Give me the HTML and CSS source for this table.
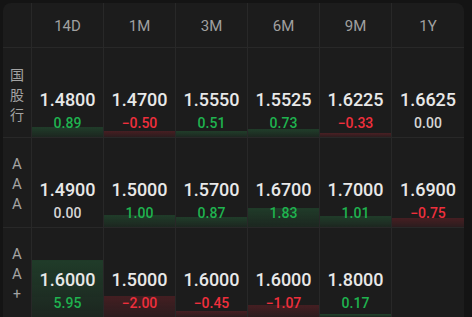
FILE: index.html
```html
<!DOCTYPE html>
<html lang="zh">
<head>
<meta charset="utf-8">
<link rel="stylesheet" href="styles.css">
</head>
<body>
<div class="panel">
  <div class="grid">
    <div class="hd corner"></div>
    <div class="hd">14D</div>
    <div class="hd">1M</div>
    <div class="hd">3M</div>
    <div class="hd">6M</div>
    <div class="hd">9M</div>
    <div class="hd last">1Y</div>

    <div class="lbl cjk"><span>国</span><span>股</span><span>行</span></div>
    <div class="cell"><div class="bar up" style="height:9px"></div><div class="v">1.4800</div><div class="d up">0.89</div></div>
    <div class="cell"><div class="bar dn" style="height:5px"></div><div class="v">1.4700</div><div class="d dn">−0.50</div></div>
    <div class="cell"><div class="bar up" style="height:5px"></div><div class="v">1.5550</div><div class="d up">0.51</div></div>
    <div class="cell"><div class="bar up" style="height:7px"></div><div class="v">1.5525</div><div class="d up">0.73</div></div>
    <div class="cell"><div class="bar dn" style="height:3px"></div><div class="v">1.6225</div><div class="d dn">−0.33</div></div>
    <div class="cell last"><div class="v">1.6625</div><div class="d">0.00</div></div>

    <div class="lbl"><span>A</span><span>A</span><span>A</span></div>
    <div class="cell"><div class="v">1.4900</div><div class="d">0.00</div></div>
    <div class="cell"><div class="bar up" style="height:11px"></div><div class="v">1.5000</div><div class="d up">1.00</div></div>
    <div class="cell"><div class="bar up" style="height:9px"></div><div class="v">1.5700</div><div class="d up">0.87</div></div>
    <div class="cell"><div class="bar up" style="height:18px"></div><div class="v">1.6700</div><div class="d up">1.83</div></div>
    <div class="cell"><div class="bar up" style="height:10px"></div><div class="v">1.7000</div><div class="d up">1.01</div></div>
    <div class="cell last"><div class="bar dn" style="height:8px"></div><div class="v">1.6900</div><div class="d dn">−0.75</div></div>

    <div class="lbl"><span>A</span><span>A</span><span class="plus">+</span></div>
    <div class="cell"><div class="bar up" style="height:56px"></div><div class="v">1.6000</div><div class="d up">5.95</div></div>
    <div class="cell"><div class="bar dn" style="height:20px"></div><div class="v">1.5000</div><div class="d dn">−2.00</div></div>
    <div class="cell"><div class="bar dn" style="height:5px"></div><div class="v">1.6000</div><div class="d dn">−0.45</div></div>
    <div class="cell"><div class="bar dn" style="height:11px"></div><div class="v">1.6000</div><div class="d dn">−1.07</div></div>
    <div class="cell"><div class="bar up" style="height:2px"></div><div class="v">1.8000</div><div class="d up">0.17</div></div>
    <div class="cell last"></div>
  </div>
</div>
</body>
</html>
```

FILE: styles.css
```css
html, body {
  margin: 0;
  padding: 0;
  background: #141414;
  height: 100%;
  overflow: hidden;
}
body {
  font-family: Roboto, "Noto Sans", "Noto Sans CJK SC", sans-serif;
}
.panel {
  margin: 3px 8px 0 3px;
  width: 461px;
  background: #1c1c1c;
  border-radius: 8px 8px 0 0;
  overflow: hidden;
}
.grid {
  display: grid;
  grid-template-columns: 29px repeat(6, 72px);
  grid-template-rows: 45px 90px 90px 90px;
}
.hd {
  display: flex;
  align-items: center;
  justify-content: center;
  color: #a0a0a0;
  font-size: 15px;
  border-right: 1px solid #282828;
  border-bottom: 1px solid #282828;
  padding-top: 1px;
}
.hd.last { border-right: none; }
.lbl {
  display: flex;
  flex-direction: column;
  align-items: center;
  justify-content: center;
  color: #a3a3a3;
  font-size: 15px;
  line-height: 20px;
  border-right: 1px solid #282828;
  border-bottom: 1px solid #282828;
  padding-top: 2px;
}
.lbl.cjk {
  font-family: "Noto Sans CJK SC", sans-serif;
  font-size: 14px;
}
.lbl .plus { font-size: 14px; }
.cell {
  position: relative;
  display: flex;
  flex-direction: column;
  align-items: center;
  justify-content: flex-end;
  padding-bottom: 5px;
  border-right: 1px solid #282828;
  border-bottom: 1px solid #282828;
}
.cell.last { border-right: none; }
.bar {
  position: absolute;
  left: 0;
  right: 0;
  bottom: 0;
}
.bar.up {
  background: linear-gradient(to bottom, rgba(40, 130, 70, 0.30), rgba(30, 100, 55, 0.14));
  border-top: 1px solid rgba(50, 150, 80, 0.18);
}
.bar.dn {
  background: linear-gradient(to bottom, rgba(150, 35, 45, 0.32), rgba(120, 30, 40, 0.16));
  border-top: 1px solid rgba(180, 45, 55, 0.18);
}
.v {
  position: relative;
  color: #e8e8e8;
  font-size: 18px;
  font-weight: 500;
  line-height: 22px;
  margin-bottom: 3px;
}
.d {
  position: relative;
  color: #d6d6d6;
  font-size: 14px;
  font-weight: 500;
  line-height: 18px;
}
.d.up { color: #1fb34f; }
.d.dn { color: #ef2f3c; }
```
